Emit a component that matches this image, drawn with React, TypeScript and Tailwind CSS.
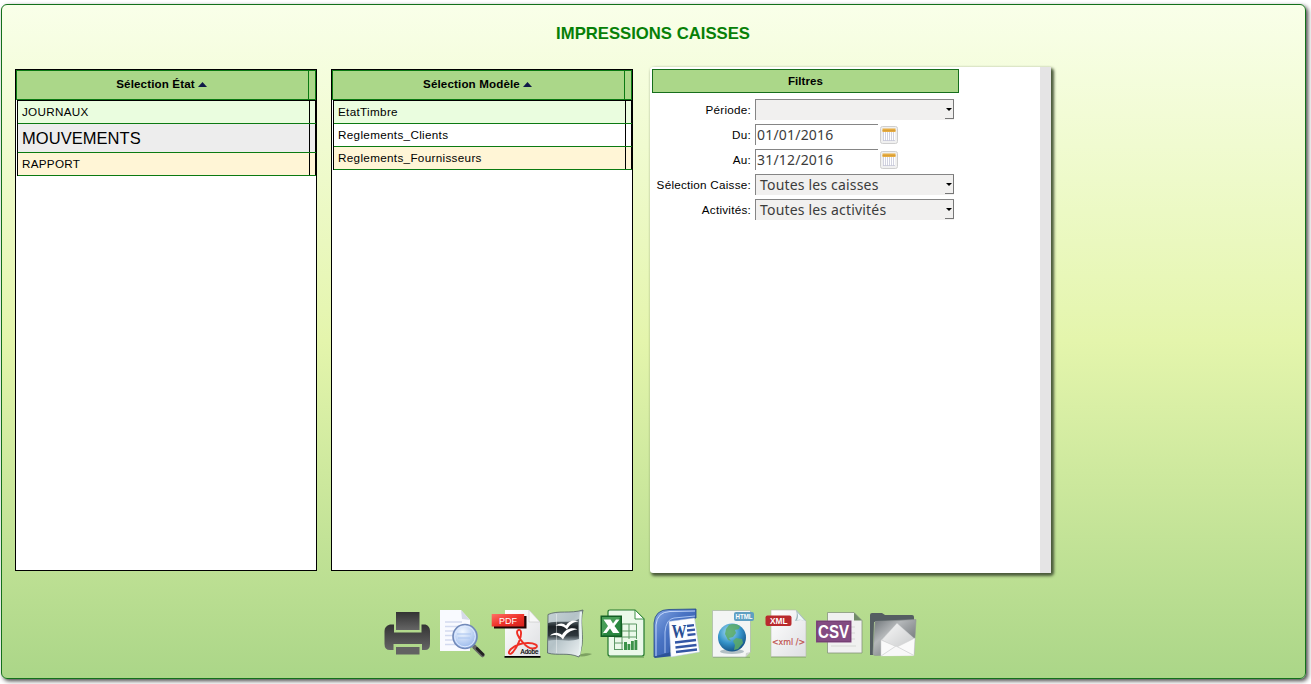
import type { ReactNode } from "react";

type Row = { label: string; tone: string; size: string };

const etats: Row[] = [
  { label: "JOURNAUX", tone: "bg-[#eafddf]", size: "h-[23px] text-[11.7px] tracking-[0.28px]" },
  { label: "MOUVEMENTS", tone: "bg-[#ededed]", size: "h-[29px] text-[16.5px] tracking-[0.05px]" },
  { label: "RAPPORT", tone: "bg-[#fff5d6]", size: "h-[23px] text-[11.7px] tracking-[0.28px]" },
];

const modeles: Row[] = [
  { label: "EtatTimbre", tone: "bg-[#eafddf]", size: "h-[23px] text-[11.7px] tracking-[0.32px]" },
  { label: "Reglements_Clients", tone: "bg-white", size: "h-[23px] text-[11.7px] tracking-[0.32px]" },
  { label: "Reglements_Fournisseurs", tone: "bg-[#fff5d6]", size: "h-[23px] text-[11.7px] tracking-[0.32px]" },
];

function ListBox({ title, rows }: { title: string; rows: Row[] }) {
  return (
    <section className="h-[502px] w-[302px] border border-black bg-white">
      <header className="flex h-[30px] border border-[#0b7a12] bg-[#abd789]">
        <div className="flex flex-1 items-center justify-center gap-[3px] pr-[2px] pb-[2px] text-[11.6px] font-bold tracking-[0.14px]">
          {title}
          <svg width="9" height="5" viewBox="0 0 9 5"><path d="M0 5 4.500 0 9 5z" fill="#101848" /></svg>
        </div>
        <div className="w-[7px] border-l border-[#0b7a12]" />
      </header>
      <div className="ml-px border-l border-t border-black">
        {rows.map((r) => (
          <div key={r.label} className={`flex border-b border-[#0b7a12] ${r.tone} ${r.size}`}>
            <div className="flex flex-1 items-center pl-1 leading-none">{r.label}</div>
            <div className="w-[7px] border-x border-black" />
          </div>
        ))}
      </div>
    </section>
  );
}

function Field({ label, children }: { label: string; children: ReactNode }) {
  return (
    <div className="flex h-[25px] items-start">
      <div className="w-[101px] pr-[3px] pt-[3px] text-right text-[11.7px] leading-[15px] tracking-[0.24px] whitespace-nowrap">
        {label}
      </div>
      {children}
    </div>
  );
}

function Select({ value }: { value: string }) {
  return (
    <div className="ml-px flex h-[21px] w-[199px] justify-between border-l border-t border-[#858585] bg-[#f1f0ef] pl-1">
      <span className="font-['Noto_Sans'] text-[14px] leading-[20px] tracking-[0.18px] whitespace-nowrap text-[#3c3c3c]">{value}</span>
      <span className="flex h-[19px] w-[9px] items-center justify-center border-b border-r border-[#777] pt-px">
        <svg width="6" height="3" viewBox="0 0 6 3"><path d="M0 0h6L3 3z" fill="#000" /></svg>
      </span>
    </div>
  );
}

function DateInput({ value }: { value: string }) {
  return (
    <div className="ml-px flex">
      <div className="h-[21px] w-[123px] border-l border-t border-[#858585] bg-white pl-px font-['Noto_Sans'] text-[14px] leading-[20px] tracking-[0.2px] text-[#3c3c3c]">
        {value}
      </div>
      <svg className="mt-[2px] ml-[2px]" width="18" height="18" viewBox="0 0 18 18">
        <rect x=".5" y=".5" width="17" height="17" rx="2" fill="#f0f0f0" stroke="#cfcfcf" />
        <rect x="3" y="6" width="12" height="9" fill="#fff" />
        <path d="M3.500 6v9m2-9v9m2-9v9m2-9v9m2-9v9m2-9v9M3 14.500h12" stroke="#c6c8d8" strokeWidth=".8" />
        <rect x="2.500" y="2.500" width="13" height="3.500" fill="#e7ad42" />
        <path d="M2.500 4.500h13" stroke="#d29a33" strokeWidth=".7" />
      </svg>
    </div>
  );
}

function Icon({ w, children }: { w: number; children: ReactNode }) {
  return (
    <svg width={w} height="56" viewBox={`0 0 ${w} 56`} className="shrink-0 font-['Liberation_Sans']">
      {children}
    </svg>
  );
}

function Defs() {
  return (
    <defs>
      <linearGradient id="ink" x1="0" y1="0" x2="0" y2="1"><stop stopColor="#333" /><stop offset="1" stopColor="#656565" /></linearGradient>
      <linearGradient id="paper" x1="0" y1="0" x2="1" y2="1"><stop stopColor="#fff" /><stop offset="1" stopColor="#dedfe2" /></linearGradient>
      <linearGradient id="red" x1="0" y1="0" x2="1" y2="1"><stop stopColor="#ff7266" /><stop offset=".5" stopColor="#f0352d" /><stop offset="1" stopColor="#d5201b" /></linearGradient>
      <linearGradient id="steel" x1="0" y1="0" x2="1" y2="1"><stop stopColor="#c6d2d6" /><stop offset=".45" stopColor="#b4c2c7" /><stop offset="1" stopColor="#f2f6f7" /></linearGradient>
      <linearGradient id="band" x1="0" y1="0" x2="0" y2="1"><stop stopColor="#6b7a80" /><stop offset=".35" stopColor="#1b2226" /><stop offset=".75" stopColor="#2f383d" /><stop offset="1" stopColor="#94a2a8" /></linearGradient>
      <linearGradient id="blue" x1="0" y1="0" x2="1" y2="1"><stop stopColor="#86a8e4" /><stop offset=".4" stopColor="#4a74c4" /><stop offset="1" stopColor="#284f9e" /></linearGradient>
      <radialGradient id="globe" cx=".4" cy=".3" r=".75"><stop stopColor="#a8e0f5" /><stop offset=".55" stopColor="#3492c8" /><stop offset="1" stopColor="#124d80" /></radialGradient>
      <radialGradient id="lens" cx=".4" cy=".3" r=".8"><stop stopColor="#f2f8ff" /><stop offset="1" stopColor="#8cafe9" /></radialGradient>
      <linearGradient id="folder" x1="0" y1="0" x2="1" y2="1"><stop stopColor="#6c7276" /><stop offset=".35" stopColor="#b4b7b9" /><stop offset="1" stopColor="#565c60" /></linearGradient>
      <linearGradient id="letter" x1="0" y1="0" x2="1" y2="1"><stop stopColor="#f8f8f8" /><stop offset="1" stopColor="#c9cbcc" /></linearGradient>
    </defs>
  );
}

function Toolbar() {
  return (
    <nav className="flex h-[56px] pl-[381px]">
      <Icon w={54}>
        <Defs />
        <path d="M13 6h23.500v18H13z" fill="url(#ink)" />
        <path d="M7 18.500h4v8h27.500v-8h4Q47 20 47 25v13q0 6-5 6h-3v-6H10.500v6H7q-5.500 0-5.500-6V25q0-5 5.500-6.500z" fill="url(#ink)" />
        <path d="M13 41h23.500v7.500H13z" fill="#626262" />
      </Icon>
      <Icon w={53}>
        <path d="M3 4h21l9 10v31H3z" fill="#f9faff" />
        <path d="m24 4 1 9 8 1z" fill="#d5d9e8" />
        <path d="M8 16h17M8 20.500h19M8 25h15M8 29.500h10M8 34h10M8 38.500h13" stroke="#d3daf0" strokeWidth="1.300" />
        <path d="m37.500 41 8 8" stroke="#666" strokeWidth="4.500" strokeLinecap="round" />
        <path d="m40 42.500 6 6" stroke="#222" strokeWidth="2.600" strokeLinecap="round" />
        <circle cx="28" cy="30.500" r="12" fill="url(#lens)" stroke="#7189b9" strokeWidth="1.600" />
        <circle cx="28" cy="30.500" r="10.300" fill="none" stroke="#dfeaff" />
        <path d="M20 28h14M21 32h12" stroke="#a8c3ef" />
      </Icon>
      <Icon w={53}>
        <path d="M15 4h24l11 12v34H15z" fill="url(#paper)" />
        <path d="M39 4v12h11z" fill="#f8f8f8" stroke="#bbb" strokeWidth=".5" />
        <path d="M14.500 50h36v1.700h-36z" fill="#000" />
        <path d="M4 10h32.500v12.500H4z" fill="#210404" />
        <path d="M1.700 8h32.500v12.500H1.700z" fill="url(#red)" />
        <text x="9" y="17.800" fontSize="9.500" textLength="18" lengthAdjust="spacingAndGlyphs" fill="#fff">PDF</text>
        <path d="M28.500 24c-3.500 1 0 8 4 12 4 5 9 7.500 13 6 4-2.500-1-5-7.500-5-7 0-13 2.500-17 6-4 4-1.500 7 2 3C28 40 31.500 31 31 26.500c0-2-1-3-2.500-2.500z" fill="none" stroke="#ee2f25" strokeWidth="1.900" />
        <text x="30.500" y="48" fontSize="6.800" textLength="18" lengthAdjust="spacingAndGlyphs" fill="#000" stroke="#000" strokeWidth=".2">Adobe</text>
      </Icon>
      <Icon w={54}>
        <path d="M34 49c8-2 12-2 15-1-4 2-9 3-15 2z" fill="#4a6938" opacity=".5" />
        <path d="M5 8.500C15 4 27 8 40 4c-4 13 2 26-2 40l-2 7C25 46 15 50 4.500 47z" fill="url(#steel)" stroke="#505e63" strokeWidth=".8" />
        <path d="M5 17c11-3 21 1 31-4-1 7 0 15 0 20-11 4-21-1-31 2z" fill="url(#band)" />
        <path d="M13.500 8v39" stroke="#fff" strokeWidth="1" opacity=".4" />
        <path d="M12.500 20c4-3.500 8-3 10.500-.5 3-5 8-6 12.500-4-6 .5-9 3.500-11.500 8-2.500-3-6-4.500-11.500-3.500zM7 29.500c4-4 9-3.500 12-.5 4-6.500 10-8 15.500-5.500-7.500.5-11.500 4-14.500 10-3-4-7-5.500-13-4z" fill="#fff" />
        <path d="M38 6c-2 14 2 28-2 43" fill="none" stroke="#e8f2f2" strokeWidth="2.200" />
      </Icon>
      <Icon w={53}>
        <path d="M11 6q0-2 2-2h25l9 9v35q0 2-2 2H13q-2 0-2-2z" fill="#ebf9ea" stroke="#24782e" strokeWidth="1.200" />
        <path d="M12 51.300h35" stroke="#467e3c" opacity=".5" />
        <path d="M38 4v9h9z" fill="#fff" stroke="#3f9348" />
        <path d="M17.500 18h22M17.500 25h22M17.500 31h22M17.500 37h22M17.500 43.500h22M17.500 18v26M25 18v26M32 18v17M39.500 18v20" stroke="#5d9865" strokeWidth="1" />
        <path d="M26 33h14.500v11H26z" fill="#ebf9ea" />
        <path d="M27 44v-8h3v8zM30.500 44v-6h2.800v6zM34 44v-9h2.800v9zM37.500 44V34h2.800v10z" fill="#3b924a" />
        <path d="M3.500 9.500H25V31H3.500z" fill="#135e25" />
        <path d="M5 11h18.500v18.500H5z" fill="#2b8741" />
        <path d="M5 11h18.500L5 29.500z" fill="#489e58" />
        <path d="M6.500 13.500h7l2.500 4 3-4h3.500l-5 6.500 5 7H16l-3-4.500-3.500 4.500H6l5-7z" fill="#fff" />
      </Icon>
      <Icon w={56}>
        <path d="M4 51V17Q5 3.500 19 3.500l27-.5v9L22 16l-2 31z" fill="url(#blue)" stroke="#234785" strokeWidth=".8" />
        <path d="M6 50V19Q7 6 20 5.500L45 5" fill="none" stroke="#c3d7fa" strokeWidth="1" />
        <path d="M15 47V26Q16 13 24 12l21-2" fill="none" stroke="#a9c4f2" strokeWidth="1" />
        <path d="m4 51 18-5 1 4-18 2z" fill="#2c5299" />
        <path d="m19 15.500 25.500-3.500L49.500 46l-28.500 5z" fill="#fdfdff" stroke="#b8c8e6" strokeWidth=".5" />
        <text x="21.500" y="31.500" fontSize="18" textLength="15" lengthAdjust="spacingAndGlyphs" fontWeight="bold" className="font-['Liberation_Serif']" fill="#2b4f94">W</text>
        <path d="m37 20 7-.8M37 24.500l8-.9M37.500 29l8-.9M25 36.500l21-2.500M25.500 41.500l21-2.500M26 46l21-2.500" stroke="#3356a5" strokeWidth="2.300" />
      </Icon>
      <Icon w={56}>
        <path d="M7 51.300h37" stroke="#5c814c" opacity=".5" />
        <path d="M6.500 4.500h38V46l-5 5h-33z" fill="#f3f5f4" stroke="#adbbaa" strokeWidth=".8" />
        <path d="m44.500 46-5 5 .5-4z" fill="#d0d4d0" />
        <ellipse cx="26" cy="45.500" rx="12" ry="2.500" fill="#b2bfc4" />
        <circle cx="26" cy="31.500" r="14" fill="url(#globe)" />
        <path d="M23 19c4-2 8-1 11 1l-1 3-4 1 1 3-3 4-4 1 2 3-3-1-3-6 1-5zM30 32l6 1 1 4-5 6-4 1 1-5-2-4z" fill="#5dac66" opacity=".85" />
        <rect x="28" y="6" width="20" height="9" rx="2" fill="#5f9fc2" />
        <text x="29.500" y="13" fontSize="6.500" fontWeight="bold" textLength="17" lengthAdjust="spacingAndGlyphs" fill="#fff">HTML</text>
      </Icon>
      <Icon w={51}>
        <path d="M9 51h35" stroke="#577545" opacity=".5" />
        <path d="M9 4h25l10 11v35.500H9z" fill="url(#paper)" stroke="#b5b8b0" strokeWidth=".6" />
        <path d="M34 4q2 6-1 11 6-2 11 0z" fill="#9eb7bc" />
        <path d="M35 6q2 4 0 8 4-1 8 1z" fill="#eff8f8" />
        <rect x="3.500" y="9.500" width="26" height="10.500" rx="2" fill="#b92a2d" />
        <text x="8" y="18" fontSize="9" fontWeight="bold" textLength="17.500" lengthAdjust="spacingAndGlyphs" fill="#fff">XML</text>
        <text x="10" y="38.500" fontSize="9.500" textLength="33" lengthAdjust="spacingAndGlyphs" className="font-['DejaVu_Sans']" fill="#c0504d" stroke="#c0504d" strokeWidth=".2">&lt;xml /&gt;</text>
      </Icon>
      <Icon w={53}>
        <path d="M14.500 6.500H41l8 8V47H14.500z" fill="#f0f1f0" stroke="#86967c" strokeWidth=".8" />
        <path d="M41 6.500v8h8z" fill="#718b68" />
        <path d="M38 21h4M38 27h4M38 33h4M18 40h25" stroke="#d5d8d4" />
        <path d="M3 14.500h35.500v22H3z" fill="#834b82" />
        <path d="M4 15.500h33.500v20H4z" fill="none" stroke="#754074" />
        <text x="5" y="31.700" fontSize="18" fontWeight="bold" textLength="31" lengthAdjust="spacingAndGlyphs" fill="#fff">CSV</text>
      </Icon>
      <Icon w={54}>
        <path d="M4 9q0-2 2-2h10l3 2h27q2 0 2 2v5H8l-1 33H4z" fill="#555e62" />
        <path d="m9 15.500 41-2-2 35-39 1q-2 0-2-2z" fill="url(#folder)" stroke="#909596" strokeWidth=".6" />
        <path d="m15 34 16-17 17 15v17l-33 1z" fill="#c9ccce" />
        <path d="m16 34 15-16.500L47 32l-14 10z" fill="url(#letter)" />
        <path d="m15 34 16 7 18-9-1 17.500-33 .5z" fill="#fafafa" stroke="#d0d0d0" strokeWidth=".5" />
        <path d="m15 50 15-10 18 9.500" fill="#f8f8f8" stroke="#d0d2d3" strokeWidth=".8" />
      </Icon>
    </nav>
  );
}

export default function App() {
  return (
    <div className="h-[684px] w-[1311px] overflow-hidden bg-white pt-[4px] pl-px font-['Liberation_Sans',sans-serif] text-black">
      <main className="h-[675px] w-[1305px] rounded-[6px] border border-[#13701b] bg-linear-to-b from-[#f9ffe9] via-[#e4f5ac] to-[#abd688] shadow-[2px_2px_4px_#444]">
        <h1 className="flex h-[62px] items-start justify-center pt-[19px] pr-px text-[16.700px] leading-[20px] font-bold text-[#078007]">
          IMPRESSIONS CAISSES
        </h1>
        <div className="flex h-[539px] pl-[13px]">
          <div className="flex gap-[14px] pt-[2px]">
            <ListBox title="Sélection État" rows={etats} />
            <ListBox title="Sélection Modèle" rows={modeles} />
          </div>
          <section className="ml-[17px] flex h-[506px] w-[401px] justify-between rounded-[3px] bg-white shadow-[2px_2px_3px_1px_#4a5a3a]">
            <div className="pt-[2px]">
              <h2 className="ml-[2px] h-[24px] w-[307px] border border-[#166e1c] bg-[#abd789] text-center text-[11.5px] leading-[22px] font-bold tracking-[0.1px]">
                Filtres
              </h2>
              <div className="pt-[6px] pl-[3px]">
                <Field label="Période:"><Select value="" /></Field>
                <Field label="Du:"><DateInput value="01/01/2016" /></Field>
                <Field label="Au:"><DateInput value="31/12/2016" /></Field>
                <Field label="Sélection Caisse:"><Select value="Toutes les caisses" /></Field>
                <Field label="Activités:"><Select value="Toutes les activités" /></Field>
              </div>
            </div>
            <div className="w-[11px] bg-[#e5e4e5]" />
          </section>
        </div>
        <Toolbar />
      </main>
    </div>
  );
}
